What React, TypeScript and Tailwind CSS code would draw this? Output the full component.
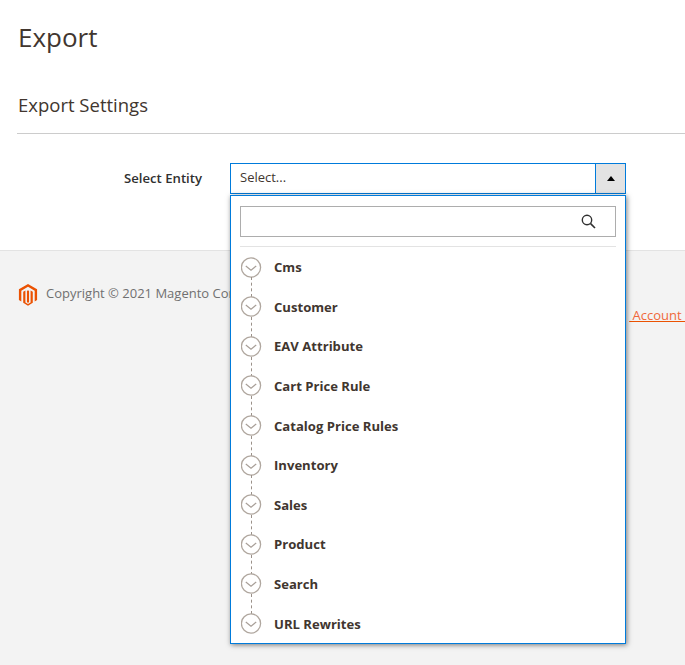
const items = ["Cms", "Customer", "EAV Attribute", "Cart Price Rule", "Catalog Price Rules", "Inventory", "Sales", "Product", "Search", "URL Rewrites"];

function Circle() {
  return (
    <svg width="21" height="21" viewBox="0 0 21 21" className="ml-px block">
      <circle cx="10" cy="10.5" r="9.6" fill="#fff" stroke="#b0a79f" strokeWidth="1.3" />
      <path d="M4.8 9 L10 13.3 L15.2 9" fill="none" stroke="#a89f98" strokeWidth="1.2" />
    </svg>
  );
}

export default function App() {
  return (
    <div className="relative flex h-[665px] w-[685px] flex-col overflow-hidden bg-white font-['Open_Sans',sans-serif] text-[#41362f]">
      <div className="h-[251px] shrink-0 border-b border-[#e3e3e3]">
        <h1 className="pl-[18px] pt-[18px] text-[26px] leading-[38px] font-normal text-[#41362f]">Export</h1>
        <div className="ml-[17px] mt-[35px] border-b border-[#cccccc] pb-[15px]">
          <h2 className="pl-px text-[18.5px] leading-[27px] font-normal text-[#41362f]">Export Settings</h2>
        </div>
        <div className="mt-[29px] flex items-start">
          <div className="w-[202px] pt-[6px] text-right text-[13.15px] leading-[18px] font-semibold text-[#303030]">Select Entity</div>
          <div className="ml-[28px] flex h-[31px] w-[396px] border border-[#007bdb]">
            <div className="flex-1 pl-[9px] pt-[4px] text-[13px] leading-[18px] text-[#41362f]">Select...</div>
            <div className="flex w-[30px] items-center justify-center border-l border-[#007bdb] bg-[#e3e3e3]">
              <div className="h-0 w-0 border-x-[4.5px] border-b-[5px] border-x-transparent border-b-black" />
            </div>
          </div>
        </div>
      </div>

      <div className="relative flex-1 bg-[#f3f3f3]">
        <div className="flex items-center pl-[18px] pt-[33px]">
          <svg width="20" height="22" viewBox="0 0 20 23" className="shrink-0">
            <path fill="#eb5202" d="M10 0 L19.5 5.5 V16.7 L17 18.2 V7 L10 3 L3 7 V18.2 L0.5 16.7 V5.5 Z" />
            <path fill="#eb5202" d="M5 8.2 L7.3 6.9 V19.3 L10 20.9 L12.7 19.3 V6.9 L15 8.2 V19.7 L10 22.8 L5 19.7 Z" />
            <path fill="#eb5202" d="M8.9 7.2 L10 6.5 L11.1 7.2 V19 L10 19.7 L8.9 19 Z" />
          </svg>
          <span className="ml-2 whitespace-nowrap text-[13px] leading-[18px] -translate-y-[2px] text-[#707070]">Copyright © 2021 Magento Commerce Inc. All rights reserved.</span>
        </div>
        <a className="absolute right-0 top-[55px] whitespace-nowrap text-[13px] leading-[18px] text-[#f0683a] underline decoration-[#eb5202]">&nbsp;Account&nbsp;</a>
      </div>

      <div className="absolute left-[230px] top-[195px] w-[396px] border border-[#007bdb] bg-white px-[9px] pt-[10px] shadow-[1px_1px_5px_rgba(0,0,0,0.5)]">
        <div className="flex h-[31px] items-center justify-end border border-[#adadad] pr-[19px]">
          <svg width="15" height="15" viewBox="0 0 15 15">
            <circle cx="6" cy="6" r="4.7" fill="none" stroke="#303030" strokeWidth="1.4" />
            <path d="M9.6 9.6 L14 14" stroke="#303030" strokeWidth="1.6" />
          </svg>
        </div>
        <div className="mt-[9px] border-t border-[#e3e3e3]" />
        <ul className="pt-[0.3px]">
          {items.map((t, i) => (
            <li key={t} className="relative flex h-[39.62px] items-center">
              {i < items.length - 1 && (
                <span className="absolute left-[11px] top-[30px] h-[20px] border-l border-dashed border-[#9b9189]" />
              )}
              <Circle />
              <span className="ml-[12px] text-[13.1px] leading-[18px] font-bold text-[#41362f]">{t}</span>
            </li>
          ))}
        </ul>
      </div>
    </div>
  );
}
